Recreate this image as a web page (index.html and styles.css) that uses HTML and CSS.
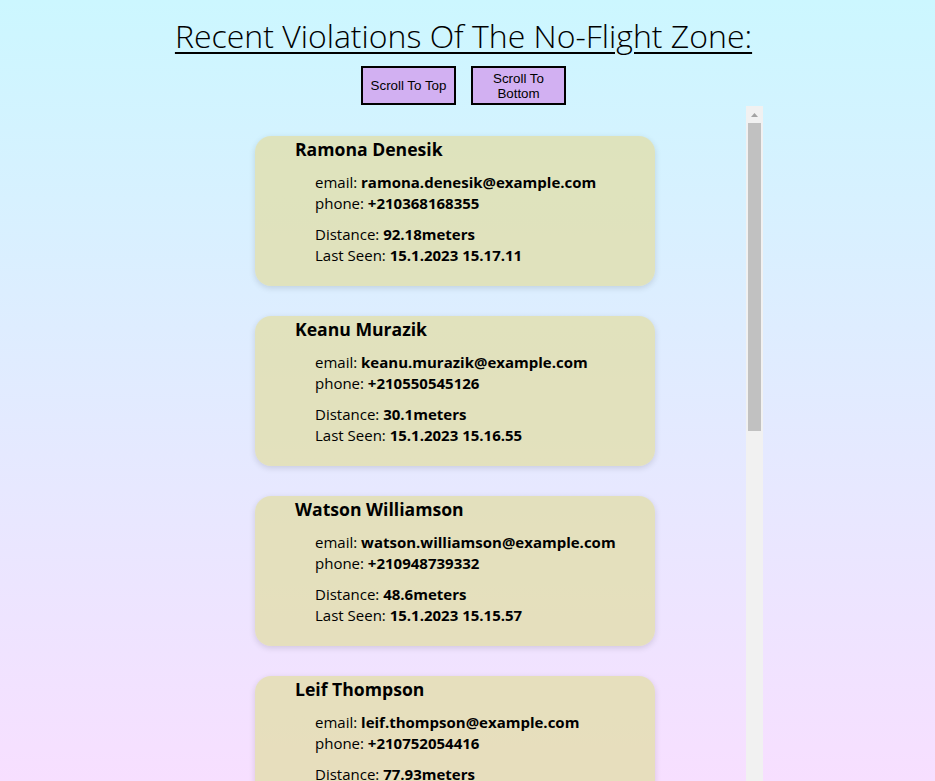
FILE: index.html
```html
<!DOCTYPE html>
<html lang="en">
<head>
<meta charset="utf-8">
<title>No-Flight Zone</title>
<link rel="stylesheet" href="styles.css">
</head>
<body>
<div class="page">
  <h1 class="title">Recent Violations Of The No-Flight Zone:</h1>
  <div class="controls">
    <button class="btn">Scroll To Top</button>
    <button class="btn">Scroll To Bottom</button>
  </div>
  <div class="list-wrap">
    <div class="list">
      <div class="card">
        <div class="name">Ramona Denesik</div>
        <div class="info">
          <div class="group">
            <div>email: <b>ramona.denesik@example.com</b></div>
            <div>phone: <b>+210368168355</b></div>
          </div>
          <div class="group">
            <div>Distance: <b>92.18meters</b></div>
            <div>Last Seen: <b>15.1.2023 15.17.11</b></div>
          </div>
        </div>
      </div>
      <div class="card">
        <div class="name">Keanu Murazik</div>
        <div class="info">
          <div class="group">
            <div>email: <b>keanu.murazik@example.com</b></div>
            <div>phone: <b>+210550545126</b></div>
          </div>
          <div class="group">
            <div>Distance: <b>30.1meters</b></div>
            <div>Last Seen: <b>15.1.2023 15.16.55</b></div>
          </div>
        </div>
      </div>
      <div class="card">
        <div class="name">Watson Williamson</div>
        <div class="info">
          <div class="group">
            <div>email: <b>watson.williamson@example.com</b></div>
            <div>phone: <b>+210948739332</b></div>
          </div>
          <div class="group">
            <div>Distance: <b>48.6meters</b></div>
            <div>Last Seen: <b>15.1.2023 15.15.57</b></div>
          </div>
        </div>
      </div>
      <div class="card">
        <div class="name">Leif Thompson</div>
        <div class="info">
          <div class="group">
            <div>email: <b>leif.thompson@example.com</b></div>
            <div>phone: <b>+210752054416</b></div>
          </div>
          <div class="group">
            <div>Distance: <b>77.93meters</b></div>
            <div>Last Seen: <b>15.1.2023 15.14.38</b></div>
          </div>
        </div>
      </div>
    </div>
    <div class="scrollbar" aria-hidden="true">
      <div class="sb-arrow">
        <svg width="7" height="4" viewBox="0 0 7 4"><polygon points="3.5,0 7,4 0,4" fill="#a3a3a3"/></svg>
      </div>
      <div class="sb-thumb"></div>
    </div>
  </div>
</div>
</body>
</html>
```

FILE: styles.css
```css
html, body {
  margin: 0;
  height: 100%;
  overflow: hidden;
}

body {
  background: linear-gradient(to bottom, #ccf7ff 0%, #f7dfff 100%);
  font-family: "Open Sans", "Noto Sans", sans-serif;
  color: #000;
}

.page {
  padding-right: 8px;
  display: flex;
  flex-direction: column;
  align-items: center;
}

.title {
  margin: 14px 0 0;
  font-size: 32px;
  line-height: 44px;
  font-weight: 300;
  text-decoration: underline;
  text-decoration-thickness: 2px;
  text-underline-offset: 4px;
  white-space: nowrap;
}

.controls {
  display: flex;
  gap: 15px;
  margin-top: 8px;
}

.btn {
  box-sizing: border-box;
  width: 95px;
  height: 39px;
  padding: 0 6px;
  border: 2px solid #000;
  background: #d2b0f2;
  font-family: "Liberation Sans", Arial, sans-serif;
  font-size: 13.33px;
  line-height: 15px;
  color: #000;
}

.list-wrap {
  display: flex;
  width: 599px;
  height: 700px;
  margin-top: 1px;
}

.list {
  flex: 1;
  min-width: 0;
  overflow: hidden;
  padding-top: 30px;
  display: flex;
  flex-direction: column;
  align-items: center;
  gap: 30px;
}

.scrollbar {
  flex: none;
  width: 17px;
  background: #f1f1f1;
  display: flex;
  flex-direction: column;
}

.sb-arrow {
  height: 17px;
  display: flex;
  align-items: center;
  justify-content: center;
}

.sb-arrow svg {
  display: block;
}

.sb-thumb {
  height: 308px;
  margin: 0 2px;
  background: #c1c1c1;
}

.card {
  box-sizing: border-box;
  flex: none;
  width: 400px;
  height: 150px;
  padding: 1px 40px 0;
  border-radius: 16px;
  background: rgba(225, 221, 167, 0.75);
  box-shadow: 0 2px 6px rgba(0, 0, 0, 0.13);
}

.name {
  font-size: 17.6px;
  font-weight: 700;
  line-height: 24px;
  white-space: nowrap;
}

.info {
  padding-left: 20px;
  margin-top: 11px;
  font-size: 15px;
  line-height: 21px;
  white-space: nowrap;
}

.group + .group {
  margin-top: 10px;
}

.info b {
  font-weight: 700;
}
```
